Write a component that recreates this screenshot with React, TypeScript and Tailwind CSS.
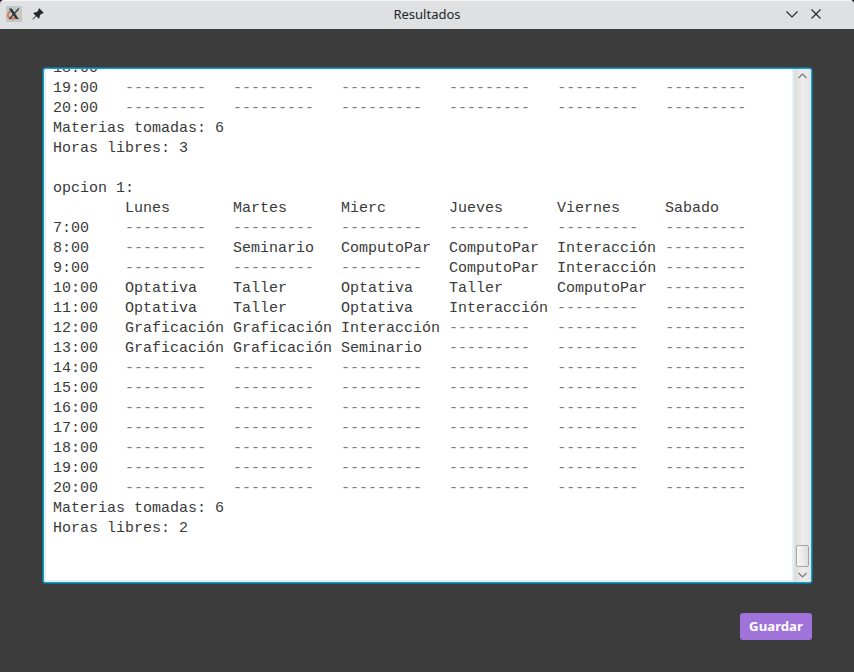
const EMPTY = "---------";
const DAYS = ["Lunes", "Martes", "Mierc", "Jueves", "Viernes", "Sabado"];

const row = (hour: string, cells: string[] = []) =>
  hour.padEnd(8) + DAYS.map((_, i) => (cells[i] || EMPTY).padEnd(12)).join("").trimEnd();

const LINES: string[] = [
  "18:00",
  row("19:00"),
  row("20:00"),
  "Materias tomadas: 6",
  "Horas libres: 3",
  "",
  "opcion 1:",
  row("", DAYS),
  row("7:00"),
  row("8:00", ["", "Seminario", "ComputoPar", "ComputoPar", "Interacción"]),
  row("9:00", ["", "", "", "ComputoPar", "Interacción"]),
  row("10:00", ["Optativa", "Taller", "Optativa", "Taller", "ComputoPar"]),
  row("11:00", ["Optativa", "Taller", "Optativa", "Interacción"]),
  row("12:00", ["Graficación", "Graficación", "Interacción"]),
  row("13:00", ["Graficación", "Graficación", "Seminario"]),
  row("14:00"),
  row("15:00"),
  row("16:00"),
  row("17:00"),
  row("18:00"),
  row("19:00"),
  row("20:00"),
  "Materias tomadas: 6",
  "Horas libres: 2",
];

function TitleBar() {
  return (
    <header className="flex h-[29px] items-center justify-between rounded-t-[4px] border-t border-[#f4f5f5] bg-[#dee0e2] pb-[2px] font-['Noto_Sans','Open_Sans',sans-serif]">
      <div className="flex w-[100px] items-center gap-[10px] pl-[6px]">
        <svg width="16" height="16" viewBox="0 0 16 16">
          <rect width="16" height="16" fill="#bdc7ce" />
          <path d="M5.500 4.500C1.800 6.200.8 9.600 2.800 11.500c2 1.500 5 1.200 7.500.3" fill="none" stroke="#ed6b2d" strokeWidth="1.600" />
          <path d="M10.500 4.500c4 .3 5 2.800 3.300 5-1 1.300-2.300 2-4.300 2.500" fill="none" stroke="#f0bd90" strokeWidth="1.300" />
          <path d="M2.800 2.500h3l7 10.500h-3z" fill="#30373b" />
          <path d="M12.800 2.500 3.500 13" stroke="#30373b" strokeWidth="1.200" />
        </svg>
        <svg width="12" height="12" viewBox="0 0 12 12" fill="#232629">
          <path d="M7.200.3 11.700 4.800 10.600 5.700 9.700 5.500 7.700 7.500 7.500 9.900 6.600 10.600 4.300 8.300 1 11.600.4 11 3.700 7.700 1.400 5.400 2.100 4.500 4.500 4.300 6.500 2.300 6.300 1.400z" />
        </svg>
      </div>
      <h1 className="text-[13px] leading-[18px] text-[#232629]">Resultados</h1>
      <div className="flex w-[100px] items-center justify-end gap-3 pr-8">
        <svg width="12" height="12" viewBox="0 0 12 12" fill="none" stroke="#232629" strokeWidth="1.100">
          <path d="M.5 3.500 6 9l5.500-5.500" />
        </svg>
        <svg width="12" height="12" viewBox="0 0 12 12" fill="none" stroke="#232629" strokeWidth="1.100">
          <path d="m1.500 1.500 9 9m0-9-9 9" />
        </svg>
      </div>
    </header>
  );
}

function Schedule() {
  return (
    <pre className="-mt-[10px] pl-[7px] font-['Liberation_Mono',monospace] text-[15px] leading-5 text-[#3a3a3a]">
      {LINES.map((line, i) => (
        <div key={i} className="h-5">
          {line.split(/(-{9})/).map((part, j) =>
            part === EMPTY ? (
              <span key={j} className="text-[#7c7c7c]">
                {part}
              </span>
            ) : (
              part
            ),
          )}
        </div>
      ))}
    </pre>
  );
}

function ScrollBar() {
  return (
    <div className="flex w-[17px] flex-col items-center justify-between bg-gradient-to-r from-[#dcdcdc] via-[#ececec] to-[#e6e6e6]">
      <svg className="mt-[3px]" width="11" height="8" viewBox="0 0 11 8" fill="none" stroke="#777" strokeWidth="1.200">
        <path d="m1.500 6 4-4 4 4" />
      </svg>
      <div className="flex flex-col items-center">
        <div className="h-[22px] w-[13px] rounded-[2px] border border-[#a5a5a5] bg-gradient-to-r from-[#f8f8f8] to-[#dedede]" />
        <svg className="mt-1 mb-[3px]" width="11" height="8" viewBox="0 0 11 8" fill="none" stroke="#777" strokeWidth="1.200">
          <path d="m1.500 2 4 4 4-4" />
        </svg>
      </div>
    </div>
  );
}

export default function App() {
  return (
    <div className="h-[672px] w-[854px] overflow-hidden bg-black">
      <TitleBar />
      <main className="flex h-[643px] flex-col items-end bg-[#3c3c3c] pt-[39px] pr-[42px] pl-[43px]">
        <section className="flex h-[515px] w-full overflow-hidden rounded-[3px] border border-[#0f9dd0] bg-white shadow-[0_0_0_1px_#1d6d85]">
          <div className="flex-1 overflow-hidden border-x-2 border-b-2 border-[#e0f2f8]">
            <Schedule />
          </div>
          <ScrollBar />
        </section>
        <button className="mt-[30px] h-[27px] w-[72px] rounded-[3px] bg-[#a073da] pb-[2px] font-['Noto_Sans','Open_Sans',sans-serif] text-[13.2px] leading-[18px] font-bold text-white">
          Guardar
        </button>
      </main>
    </div>
  );
}
